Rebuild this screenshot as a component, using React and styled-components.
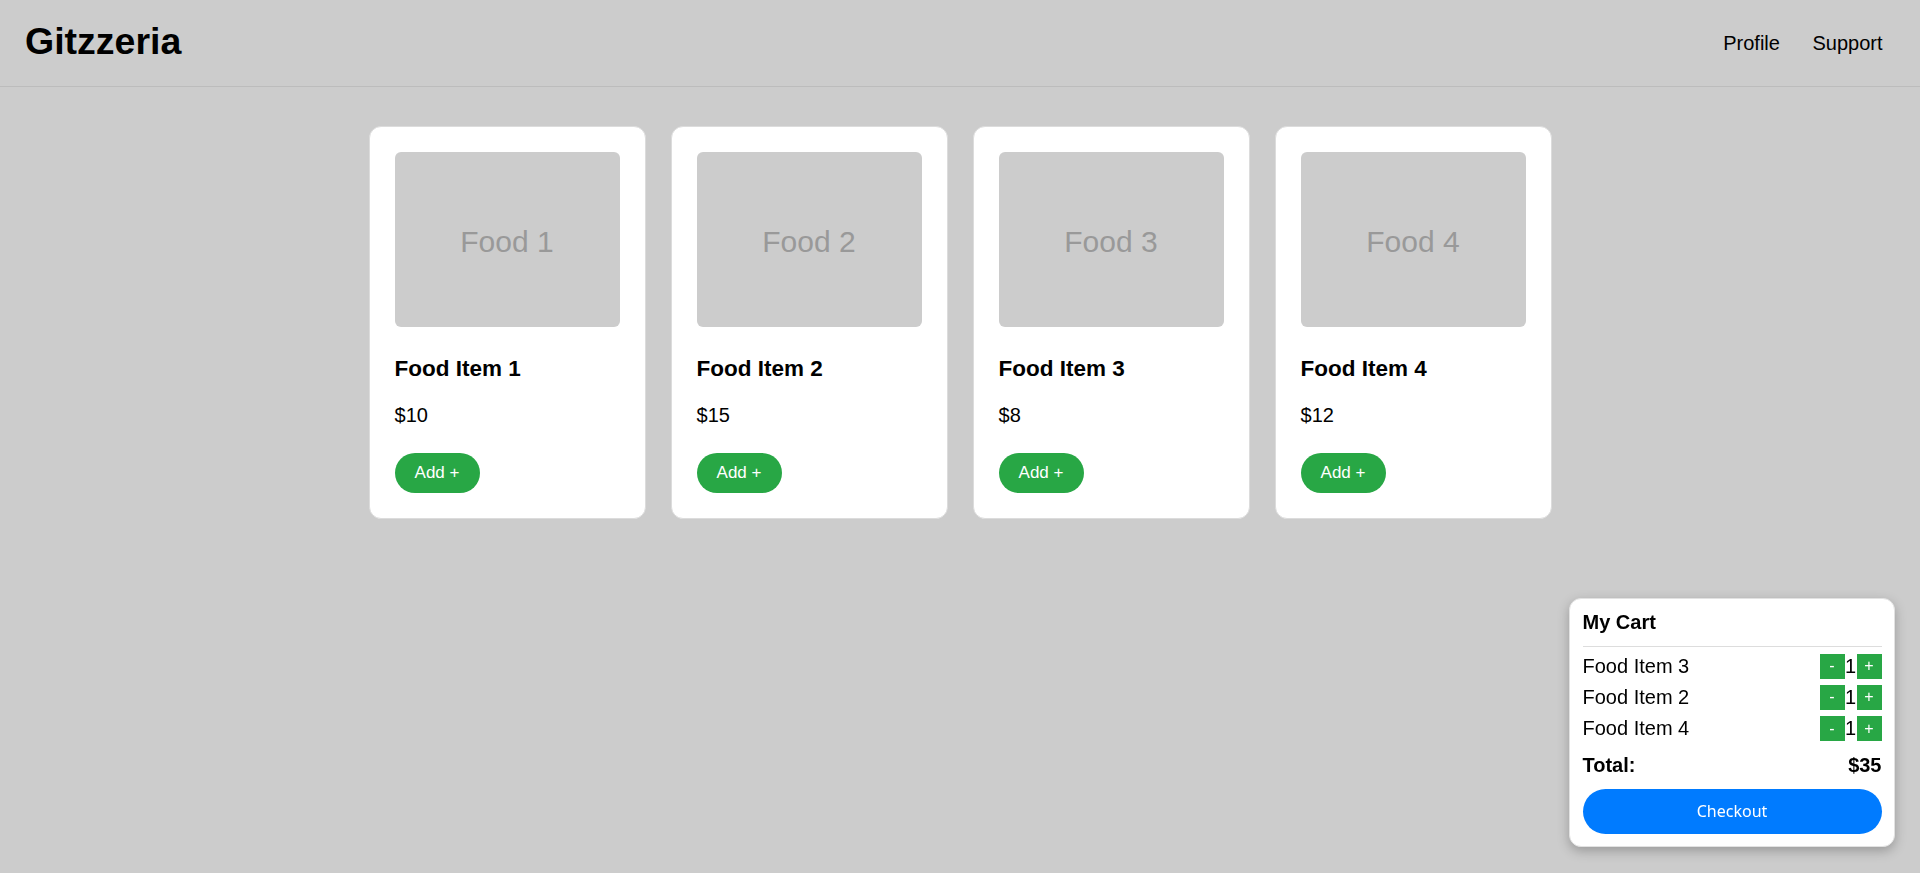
import React from 'react';
import styled, { createGlobalStyle } from 'styled-components';

const GlobalStyle = createGlobalStyle`
  html, body {
    margin: 0;
    padding: 0;
    background: #cccccc;
    font-family: "Liberation Sans", Arial, sans-serif;
    color: #000;
  }
  * {
    box-sizing: border-box;
  }
`;

const foods = [
  { id: 1, name: 'Food Item 1', price: 10 },
  { id: 2, name: 'Food Item 2', price: 15 },
  { id: 3, name: 'Food Item 3', price: 8 },
  { id: 4, name: 'Food Item 4', price: 12 },
];

const Header = styled.header`
  display: flex;
  justify-content: space-between;
  align-items: center;
  height: 87px;
  padding: 0 37.5px 0 25px;
  border-bottom: 1px solid #bcbcbc;
`;

const Logo = styled.h1`
  margin: 0 0 4px;
  font-size: 37.5px;
  font-weight: 700;
`;

const Nav = styled.nav`
  display: flex;
  gap: 32.5px;
  font-size: 20px;
  a {
    color: #000;
    text-decoration: none;
  }
`;

const Menu = styled.main`
  display: flex;
  justify-content: center;
  gap: 25px;
  padding-top: 39px;
`;

const Card = styled.div`
  width: 277px;
  padding: 25px;
  background: #fff;
  border: 1px solid #dcdcdc;
  border-radius: 12px;
`;

const Picture = styled.div`
  display: flex;
  justify-content: center;
  align-items: center;
  height: 175px;
  padding-top: 5px;
  background: #cccccc;
  border-radius: 6px;
  color: #999;
  font-size: 30px;
`;

const ItemName = styled.h3`
  margin: 28.5px 0 22.5px;
  font-size: 22.5px;
  font-weight: 700;
`;

const Price = styled.p`
  margin: 0 0 26px;
  font-size: 20px;
`;

const AddButton = styled.button`
  width: 85px;
  height: 40px;
  border: none;
  border-radius: 20px;
  background: #28a745;
  color: #fff;
  font-family: "Liberation Sans", Arial, sans-serif;
  font-size: 17px;
  cursor: pointer;
`;

const Cart = styled.aside`
  position: fixed;
  right: 25px;
  bottom: 26px;
  width: 326px;
  padding: 12px 12.5px 12.5px;
  background: #fff;
  border: 1px solid #e2e2e2;
  border-radius: 12px;
  box-shadow: 0 4px 12px rgba(0, 0, 0, 0.25);
`;

const CartTitle = styled.h4`
  margin: 0 0 6.25px;
  padding-bottom: 12.5px;
  border-bottom: 1px solid #dddddd;
  font-size: 20px;
  font-weight: 700;
`;

const CartRow = styled.div`
  display: flex;
  justify-content: space-between;
  align-items: center;
  height: 25px;
  margin-bottom: 6.25px;
  font-size: 20px;
`;

const Qty = styled.div`
  display: flex;
  align-items: center;
  span {
    width: 12px;
    text-align: center;
  }
`;

const QtyButton = styled.button`
  width: 25px;
  height: 25px;
  padding: 0;
  border: none;
  background: #28a745;
  color: #fff;
  font-family: "Liberation Sans", Arial, sans-serif;
  font-size: 16px;
`;

const Total = styled.div`
  display: flex;
  justify-content: space-between;
  margin-top: 12.5px;
  font-size: 20px;
  font-weight: 700;
`;

const Checkout = styled.button`
  display: block;
  width: 100%;
  height: 45px;
  margin-top: 12px;
  border: none;
  border-radius: 22.5px;
  background: #007bff;
  color: #fff;
  font-family: "Noto Sans", "Liberation Sans", sans-serif;
  font-size: 16px;
`;

const cartItems = [foods[2], foods[1], foods[3]];

export default function App() {
  const total = cartItems.reduce((sum, f) => sum + f.price, 0);
  return (
    <>
      <GlobalStyle />
      <Header>
        <Logo>Gitzzeria</Logo>
        <Nav>
          <a href="#profile">Profile</a>
          <a href="#support">Support</a>
        </Nav>
      </Header>
      <Menu>
        {foods.map(f => (
          <Card key={f.id}>
            <Picture>Food {f.id}</Picture>
            <ItemName>{f.name}</ItemName>
            <Price>${f.price}</Price>
            <AddButton>Add +</AddButton>
          </Card>
        ))}
      </Menu>
      <Cart>
        <CartTitle>My Cart</CartTitle>
        {cartItems.map(f => (
          <CartRow key={f.id}>
            <span>{f.name}</span>
            <Qty>
              <QtyButton>-</QtyButton>
              <span>1</span>
              <QtyButton>+</QtyButton>
            </Qty>
          </CartRow>
        ))}
        <Total>
          <span>Total:</span>
          <span>${total}</span>
        </Total>
        <Checkout>Checkout</Checkout>
      </Cart>
    </>
  );
}
